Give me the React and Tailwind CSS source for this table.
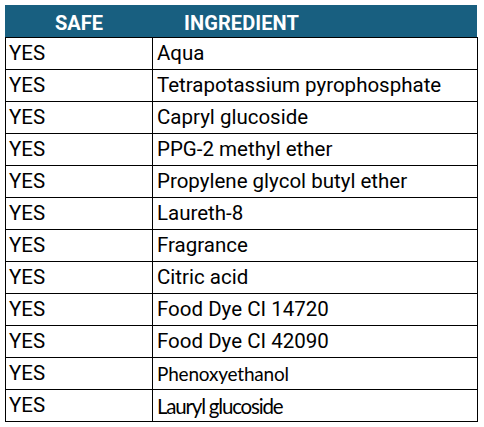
export default function App() {
  const rows = [
    ["Aqua", 0],
    ["Tetrapotassium pyrophosphate", 0],
    ["Capryl glucoside", 0],
    ["PPG-2 methyl ether", 0],
    ["Propylene glycol butyl ether", 0],
    ["Laureth-8", 0],
    ["Fragrance", 0],
    ["Citric acid", 0],
    ["Food Dye CI 14720", 0],
    ["Food Dye CI 42090", 0],
    ["Phenoxyethanol", 1],
    ["Lauryl glucoside", 2],
  ];
  const nameCls = [
    "text-[20.5px]",
    "text-[19px] tracking-[-0.2px] pt-[2px]",
    "text-[20.5px] tracking-[-1.2px] pt-[2px]",
  ];
  return (
    <div className="bg-white w-[484px] h-[427px] pt-[5px] pl-[5px]">
      <div className="w-[473px]">
        <div className="flex h-[32px] w-[472px] bg-[#185f80] text-white font-bold text-[20px] items-center pt-[3px]" style={{ fontFamily: "Roboto, sans-serif" }}>
          <div className="w-[147px] text-center pl-[1px]">SAFE</div>
          <div className="pl-[32px] tracking-[0.1px]">INGREDIENT</div>
        </div>
        <div className="border-t border-l border-r border-black" style={{ fontFamily: "Roboto, sans-serif" }}>
          {rows.map(([name, alt], i) => (
            <div key={i} className="flex h-[32px] border-b border-black text-black items-center">
              <div className="w-[147px] h-full flex items-center border-r border-black pl-[3px] text-[20.5px]">YES</div>
              <div
                className={`flex-1 pl-[4px] ${nameCls[alt]}`}
                style={alt ? { fontFamily: "Lato, 'Open Sans', sans-serif" } : undefined}
              >
                {name}
              </div>
            </div>
          ))}
        </div>
      </div>
    </div>
  );
}
